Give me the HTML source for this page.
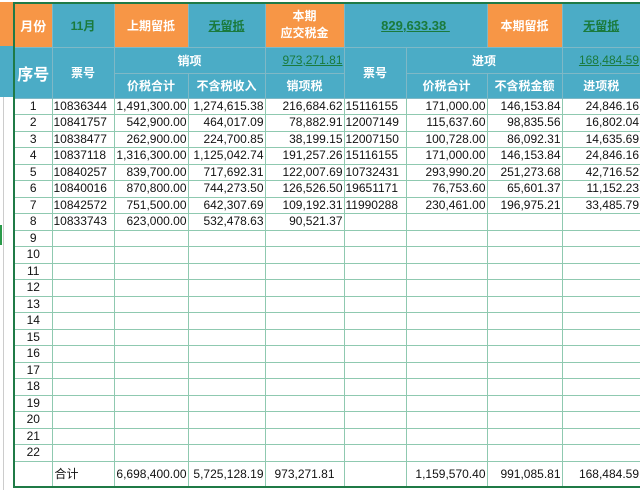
<!DOCTYPE html>
<html><head><meta charset="utf-8"><style>
body{margin:0;width:640px;height:490px;background:#fff;position:relative;overflow:hidden;font-family:"Liberation Sans","Noto Sans CJK SC",sans-serif;}
.strip{position:absolute;left:0;width:13px}
table{position:absolute;left:13px;top:2px;border-collapse:collapse;table-layout:fixed;width:627px;border:2px solid #1f7a46}
td{border:1px solid #8fc9b0;padding:0 1px;font-size:12px;color:#111;white-space:nowrap;overflow:hidden}
.h td{border-color:#7fb8c6}
.o{background:#f79646;color:#fff;font-weight:bold;text-align:center}
.t{background:#4bacc6;color:#fff;font-weight:bold;text-align:center}
.g{color:#1a7a3c;text-decoration:underline}
.c{text-align:center}.r{text-align:right}
tr.d td{height:15.5px;line-height:15px}
</style></head><body>
<div class="strip" style="top:2px;height:44px;background:#f79646"></div>
<div class="strip" style="top:46px;height:51px;background:#4bacc6"></div>
<div style="position:absolute;left:3px;top:97px;width:1px;height:393px;background:#ccc"></div>
<div style="position:absolute;left:0;top:225px;width:2px;height:20px;background:#2a9a4a"></div>
<table>
<colgroup><col style="width:38px"><col style="width:62px"><col style="width:74px"><col style="width:77px"><col style="width:79px"><col style="width:62px"><col style="width:81px"><col style="width:75px"><col style="width:79px"></colgroup>
<tr class="h" style="height:44px"><td class="o" style="font-size:13px">月份</td><td class="t"><span style="color:#1a7a3c">11月</span></td><td class="o">上期留抵</td><td class="t"><span class="g">无留抵</span></td><td class="o" style="line-height:17px">本期<br>应交税金</td><td class="t" colspan="2"><span class="g" style="font-size:13px">829,633.38&nbsp;</span></td><td class="o">本期留抵</td><td class="t"><span class="g">无留抵</span></td></tr>
<tr class="h" style="height:26px"><td class="t" rowspan="2" style="font-size:16px">序号</td><td class="t" rowspan="2">票号</td><td class="t" colspan="2">销项</td><td class="t r"><span class="g" style="font-weight:normal">973,271.81</span></td><td class="t" rowspan="2">票号</td><td class="t" colspan="2">进项</td><td class="t r"><span class="g" style="font-weight:normal">168,484.59</span></td></tr>
<tr class="h" style="height:25px"><td class="t">价税合计</td><td class="t">不含税收入</td><td class="t">销项税</td><td class="t">价税合计</td><td class="t">不含税金额</td><td class="t">进项税</td></tr>
<tr class="d"><td class="c">1</td><td>10836344</td><td class="r">1,491,300.00</td><td class="r">1,274,615.38</td><td class="r">216,684.62</td><td>15116155</td><td class="r">171,000.00</td><td class="r">146,153.84</td><td class="r">24,846.16</td></tr>
<tr class="d"><td class="c">2</td><td>10841757</td><td class="r">542,900.00</td><td class="r">464,017.09</td><td class="r">78,882.91</td><td>12007149</td><td class="r">115,637.60</td><td class="r">98,835.56</td><td class="r">16,802.04</td></tr>
<tr class="d"><td class="c">3</td><td>10838477</td><td class="r">262,900.00</td><td class="r">224,700.85</td><td class="r">38,199.15</td><td>12007150</td><td class="r">100,728.00</td><td class="r">86,092.31</td><td class="r">14,635.69</td></tr>
<tr class="d"><td class="c">4</td><td>10837118</td><td class="r">1,316,300.00</td><td class="r">1,125,042.74</td><td class="r">191,257.26</td><td>15116155</td><td class="r">171,000.00</td><td class="r">146,153.84</td><td class="r">24,846.16</td></tr>
<tr class="d"><td class="c">5</td><td>10840257</td><td class="r">839,700.00</td><td class="r">717,692.31</td><td class="r">122,007.69</td><td>10732431</td><td class="r">293,990.20</td><td class="r">251,273.68</td><td class="r">42,716.52</td></tr>
<tr class="d"><td class="c">6</td><td>10840016</td><td class="r">870,800.00</td><td class="r">744,273.50</td><td class="r">126,526.50</td><td>19651171</td><td class="r">76,753.60</td><td class="r">65,601.37</td><td class="r">11,152.23</td></tr>
<tr class="d"><td class="c">7</td><td>10842572</td><td class="r">751,500.00</td><td class="r">642,307.69</td><td class="r">109,192.31</td><td>11990288</td><td class="r">230,461.00</td><td class="r">196,975.21</td><td class="r">33,485.79</td></tr>
<tr class="d"><td class="c">8</td><td>10833743</td><td class="r">623,000.00</td><td class="r">532,478.63</td><td class="r">90,521.37</td><td></td><td></td><td></td><td></td></tr>
<tr class="d"><td class="c">9</td><td></td><td></td><td></td><td></td><td></td><td></td><td></td><td></td></tr>
<tr class="d"><td class="c">10</td><td></td><td></td><td></td><td></td><td></td><td></td><td></td><td></td></tr>
<tr class="d"><td class="c">11</td><td></td><td></td><td></td><td></td><td></td><td></td><td></td><td></td></tr>
<tr class="d"><td class="c">12</td><td></td><td></td><td></td><td></td><td></td><td></td><td></td><td></td></tr>
<tr class="d"><td class="c">13</td><td></td><td></td><td></td><td></td><td></td><td></td><td></td><td></td></tr>
<tr class="d"><td class="c">14</td><td></td><td></td><td></td><td></td><td></td><td></td><td></td><td></td></tr>
<tr class="d"><td class="c">15</td><td></td><td></td><td></td><td></td><td></td><td></td><td></td><td></td></tr>
<tr class="d"><td class="c">16</td><td></td><td></td><td></td><td></td><td></td><td></td><td></td><td></td></tr>
<tr class="d"><td class="c">17</td><td></td><td></td><td></td><td></td><td></td><td></td><td></td><td></td></tr>
<tr class="d"><td class="c">18</td><td></td><td></td><td></td><td></td><td></td><td></td><td></td><td></td></tr>
<tr class="d"><td class="c">19</td><td></td><td></td><td></td><td></td><td></td><td></td><td></td><td></td></tr>
<tr class="d"><td class="c">20</td><td></td><td></td><td></td><td></td><td></td><td></td><td></td><td></td></tr>
<tr class="d"><td class="c">21</td><td></td><td></td><td></td><td></td><td></td><td></td><td></td><td></td></tr>
<tr class="d"><td class="c">22</td><td></td><td></td><td></td><td></td><td></td><td></td><td></td><td></td></tr>
<tr style="height:26px"><td></td><td style="padding-left:2px">合计</td><td class="r">6,698,400.00</td><td class="r">5,725,128.19</td><td class="c">973,271.81</td><td></td><td class="r">1,159,570.40</td><td class="r">991,085.81</td><td class="r">168,484.59</td></tr>
</table>
</body></html>
